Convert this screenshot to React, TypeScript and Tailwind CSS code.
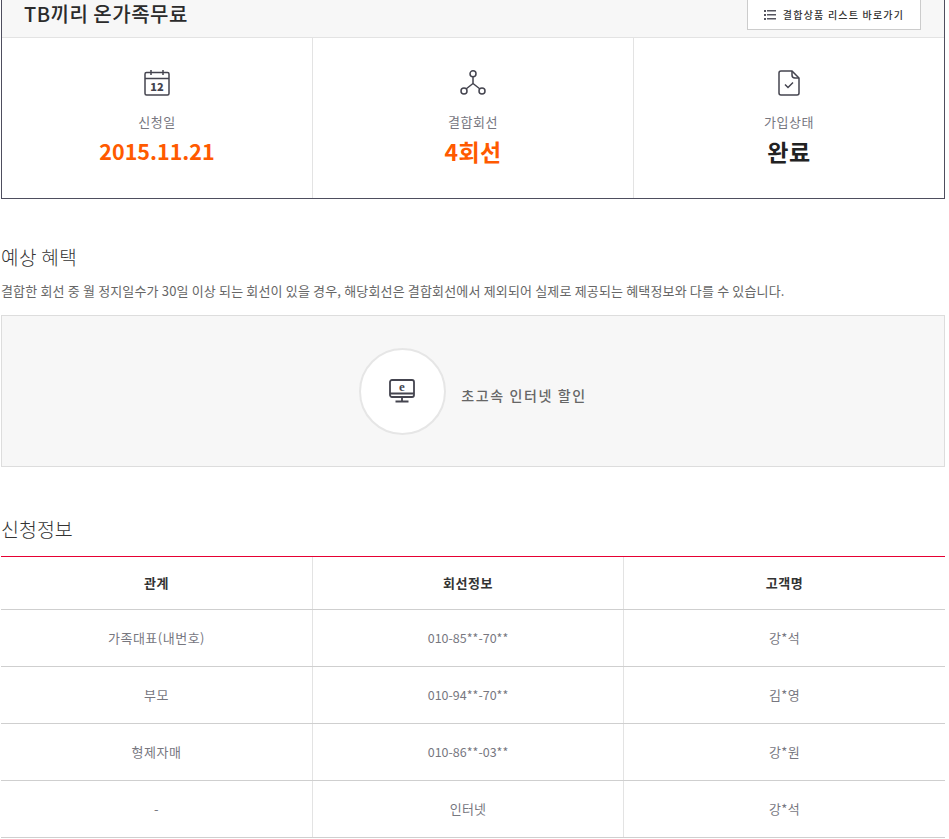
import React from "react";

const font = { fontFamily: '"Noto Sans CJK KR", "Noto Sans", sans-serif' };

const CalendarIcon = () => (
  <svg width="26" height="26" viewBox="0 0 26 26" fill="none" stroke="#44444f" strokeWidth="1.5">
    <rect x="1" y="2.5" width="24" height="22.5" rx="1.5" />
    <path d="M1 8.5h24M7 0v5M19 0v5" />
    <text x="13" y="21" textAnchor="middle" fontSize="11" fontWeight="900" fill="#44444f" stroke="none">
      12
    </text>
  </svg>
);

const NodesIcon = () => (
  <svg width="26" height="26" viewBox="0 0 26 26" fill="none" stroke="#44444f" strokeWidth="1.5">
    <circle cx="13" cy="3.8" r="3" />
    <circle cx="4" cy="21" r="3" />
    <circle cx="22" cy="21" r="3" />
    <path d="M13 7v6.5M13 13.5l-7 5.5M13 13.5l7 5.5" />
  </svg>
);

const FileCheckIcon = () => (
  <svg width="22" height="26" viewBox="0 0 22 26" fill="none" stroke="#44444f" strokeWidth="1.5">
    <path d="M3 1h11l7 7v15a2 2 0 0 1-2 2H3a2 2 0 0 1-2-2V3a2 2 0 0 1 2-2z" />
    <path d="M14 1v4a3 3 0 0 0 3 3h4" />
    <path d="M7 14.5l3 3 5-5" />
  </svg>
);

const MonitorIcon = () => (
  <svg width="26" height="24" viewBox="0 0 26 24" fill="none" stroke="#44444f" strokeWidth="1.8" className="-ml-px">
    <rect x="1" y="1" width="24" height="17" rx="2" />
    <path d="M1 14.5h24M13 18v4M6.500 22.500h13" />
    <text x="13" y="11.500" textAnchor="middle" fontSize="13" fontWeight="700" fontFamily="Liberation Serif, serif" fill="#44444f" stroke="none">
      e
    </text>
  </svg>
);

const ListIcon = () => (
  <svg width="12" height="12" viewBox="0 0 12 12" fill="#55555f">
    <rect x="0" y="1" width="2" height="2" />
    <rect x="3" y="1" width="9" height="1.500" />
    <rect x="0" y="5" width="2" height="2" />
    <rect x="3" y="5" width="9" height="1.500" />
    <rect x="0" y="9" width="2" height="2" />
    <rect x="3" y="9" width="9" height="1.500" />
  </svg>
);

const summary = [
  { icon: <CalendarIcon />, label: "신청일", value: "2015.11.21", valueClass: "text-[21.500px] text-[#ff5a00]", width: "w-[311px]" },
  { icon: <NodesIcon />, label: "결합회선", value: "4회선", valueClass: "text-[23px] tracking-[0.3px] text-[#ff5a00]", width: "w-[321px]" },
  { icon: <FileCheckIcon />, label: "가입상태", value: "완료", valueClass: "text-[23px] tracking-[0.5px] text-[#222222]", width: "flex-1" },
];

const rows = [
  ["가족대표(내번호)", "010-85**-70**", "강*석"],
  ["부모", "010-94**-70**", "김*영"],
  ["형제자매", "010-86**-03**", "강*원"],
  ["-", "인터넷", "강*석"],
];

const App = () => {
  return (
    <div className="w-[945px] h-[839px] overflow-hidden bg-white" style={font}>
      {/* Top summary box */}
      <div className="ml-px border-x border-b border-[#4e4e5e] h-[199px]">
        <div className="h-[38px] bg-[#f7f7f7] border-b border-[#e3e3e3] flex items-start justify-between pl-[22px] pr-[23px]">
          <h1 className="text-[20px] leading-[28px] font-medium tracking-[0.5px] text-[#2b2b2b]">TB끼리 온가족무료</h1>
          <a className="w-[174px] h-[30px] bg-white border-x border-b border-[#cccccc] flex items-center justify-center gap-[7px] text-[10px] font-medium tracking-[1.2px] text-[#333333]">
            <ListIcon />
            결합상품 리스트 바로가기
          </a>
        </div>
        <div className="flex h-[160px]">
          {summary.map((s, i) => (
            <div
              key={s.label}
              className={`${s.width} flex flex-col items-center pt-[32px] ${i < 2 ? "border-r border-[#e3e3e3]" : ""}`}
            >
              <div className="h-[26px] flex items-center">{s.icon}</div>
              <p className="mt-[16px] text-[13px] leading-[20px] tracking-[0.5px] text-[#77777f]">{s.label}</p>
              <p className={`mt-[4px] leading-[30px] font-bold ${s.valueClass}`}>{s.value}</p>
            </div>
          ))}
        </div>
      </div>

      {/* Expected benefits */}
      <h2 className="mt-[44px] ml-px text-[19px] leading-[27px] font-light tracking-[0.4px] text-[#333333]">예상 혜택</h2>
      <p className="mt-[12px] ml-px text-[13px] leading-[18px] tracking-[0.16px] text-[#666666]">
        결합한 회선 중 월 정지일수가 30일 이상 되는 회선이 있을 경우, 해당회선은 결합회선에서 제외되어 실제로 제공되는 혜택정보와 다를 수 있습니다.
      </p>
      <div className="mt-[15px] ml-px h-[152px] bg-[#f7f7f7] border border-[#dddddd] flex items-center justify-center">
        <div className="w-[87px] h-[87px] rounded-full bg-white border-2 border-[#e6e6e6] flex items-center justify-center">
          <MonitorIcon />
        </div>
        <span className="ml-[15px] mt-[9px] text-[14px] font-medium tracking-[1.6px] text-[#666666]">초고속 인터넷 할인</span>
      </div>

      {/* Application info */}
      <h2 className="mt-[47px] ml-px text-[19.500px] leading-[29px] font-light text-[#333333]">신청정보</h2>
      <div className="mt-[13px] ml-px h-px bg-[#e60033]" />
      <div className="ml-px">
        <div className="grid grid-cols-[312px_311px_1fr] h-[53px] border-b border-[#cfcfcf] text-[13px] font-bold tracking-[0.6px] text-[#333333]">
          <div className="flex items-center justify-center border-r border-[#e3e3e3]">관계</div>
          <div className="flex items-center justify-center border-r border-[#e3e3e3]">회선정보</div>
          <div className="flex items-center justify-center">고객명</div>
        </div>
        {rows.map((r, i) => (
          <div key={i} className="grid grid-cols-[312px_311px_1fr] h-[57px] border-b border-[#cfcfcf] text-[13px] text-[#77777f]">
            <div className="flex items-center justify-center border-r border-[#e3e3e3] tracking-[0.5px]">{r[0]}</div>
            <div className={`flex items-center justify-center border-r border-[#e3e3e3] ${r[1].startsWith("010") ? "text-[12.500px]" : "tracking-[0.2px]"}`}>
              {r[1]}
            </div>
            <div className="flex items-center justify-center tracking-[0.3px]">{r[2]}</div>
          </div>
        ))}
      </div>
    </div>
  );
};

export default App;
